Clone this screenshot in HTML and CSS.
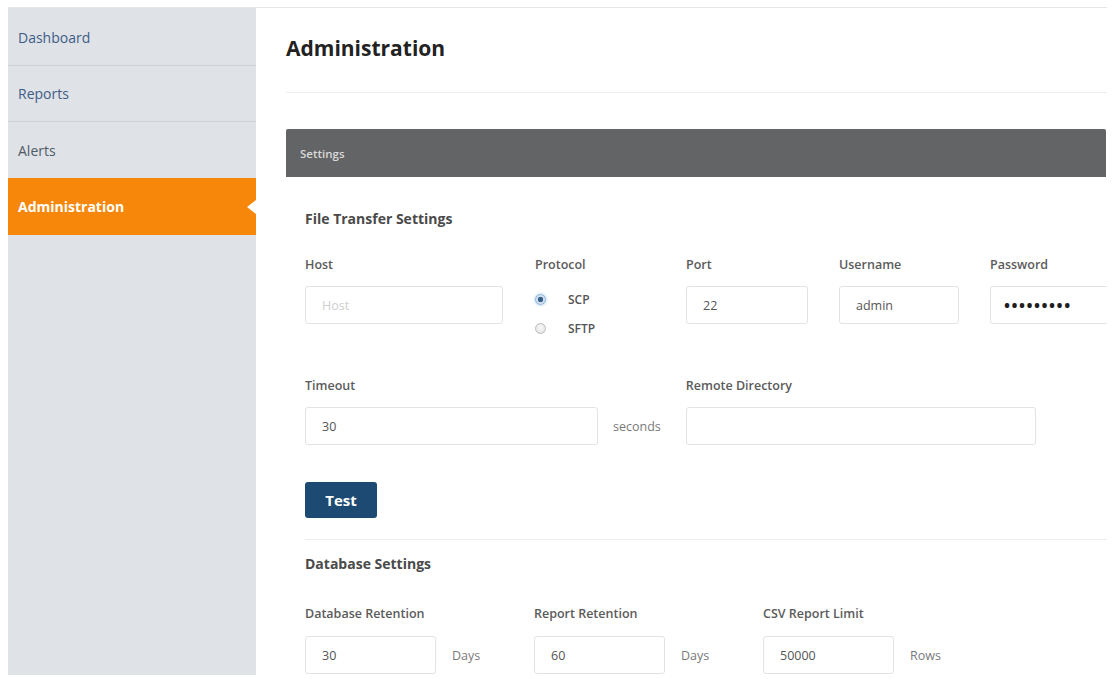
FILE: index.html
```html
<!DOCTYPE html>
<html lang="en">
<head>
    <meta charset="UTF-8">
    <meta name="viewport" content="width=device-width, initial-scale=1.0">
    <title>Administration</title>
    <link rel="stylesheet" href="styles.css">
</head>
<body>

<div class="page">
  <nav class="sidebar">
    <a class="navItem" href="#">Dashboard</a>
    <a class="navItem" href="#">Reports</a>
    <a class="navItem alerts" href="#">Alerts</a>
    <a class="navItem active" href="#">Administration</a>
  </nav>

  <main class="main">
    <h1 class="pageTitle">Administration</h1>

    <section class="panel">
      <div class="panelHeader">Settings</div>
      <div class="panelBody">
        <h2 class="groupTitle">File Transfer Settings</h2>

        <div class="row">
          <div class="field colHost">
            <label>Host</label>
            <input class="input wHost" type="text" placeholder="Host">
          </div>
          <div class="field colProtocol">
            <label>Protocol</label>
            <div class="radios">
              <div class="radio"><span class="dot checked"></span>SCP</div>
              <div class="radio"><span class="dot"></span>SFTP</div>
            </div>
          </div>
          <div class="field colPort">
            <label>Port</label>
            <input class="input wPort" type="text" value="22">
          </div>
          <div class="field colUser">
            <label>Username</label>
            <input class="input wUser" type="text" value="admin">
          </div>
          <div class="field colPass">
            <label>Password</label>
            <input class="input wPass pass" type="text" value="&#8226;&#8226;&#8226;&#8226;&#8226;&#8226;&#8226;&#8226;&#8226;">
          </div>
        </div>

        <div class="row rowTimeout">
          <div class="field">
            <label>Timeout</label>
            <div class="inline">
              <input class="input wTimeout" type="text" value="30">
              <span class="unit unitSeconds">seconds</span>
            </div>
          </div>
          <div class="field">
            <label>Remote Directory</label>
            <input class="input wDir" type="text">
          </div>
        </div>

        <button class="btn">Test</button>

        <hr class="divider">

        <h2 class="groupTitle dbTitle">Database Settings</h2>

        <div class="row rowDb">
          <div class="field colDb">
            <label>Database Retention</label>
            <div class="inline">
              <input class="input wDb" type="text" value="30">
              <span class="unit">Days</span>
            </div>
          </div>
          <div class="field colDb">
            <label>Report Retention</label>
            <div class="inline">
              <input class="input wDb" type="text" value="60">
              <span class="unit">Days</span>
            </div>
          </div>
          <div class="field colDb">
            <label>CSV Report Limit</label>
            <div class="inline">
              <input class="input wDb" type="text" value="50000">
              <span class="unit">Rows</span>
            </div>
          </div>
        </div>
      </div>
    </section>
  </main>
</div>

</body>
</html>
```

FILE: styles.css
```css
body, html {
  margin: 0;
  padding: 0;
  width: 100vw;
  height: 100vh;
  overflow: hidden;
  background: #fff;
  font-family: 'Open Sans', sans-serif;
}

.page {
  display: flex;
  margin: 7px 8px 0 8px;
  border-top: 1px solid #e6e6e6;
  height: 667px;
}

/* sidebar */
.sidebar {
  width: 248px;
  flex-shrink: 0;
  background: #dfe2e6;
  display: flex;
  flex-direction: column;
  padding-top: 2px;
}

.navItem {
  display: flex;
  align-items: center;
  height: 56px;
  padding-left: 10px;
  font-size: 14px;
  color: #3e5d86;
  text-decoration: none;
  border-bottom: 1px solid #cdd0d4;
  box-sizing: border-box;
  position: relative;
}

.navItem.alerts {
  color: #4f5a66;
  border-bottom: none;
}

.navItem.active {
  height: 57px;
  background: #f7870b;
  color: #fff;
  font-weight: 700;
  border-bottom: none;
}

.navItem.active::after {
  content: "";
  position: absolute;
  right: 0;
  top: 50%;
  transform: translateY(-50%);
  border-top: 7px solid transparent;
  border-bottom: 7px solid transparent;
  border-right: 9px solid #fff;
}

/* main */
.main {
  flex: 1;
  padding: 0 0 0 30px;
  min-width: 0;
}

.pageTitle {
  margin: 0;
  padding: 25px 0 29px 0;
  font-size: 21px;
  line-height: 30px;
  font-weight: 700;
  color: #222;
  border-bottom: 1px solid #eeeeee;
}

.panel {
  margin-top: 36px;
  overflow: hidden;
}

.panelHeader {
  height: 48px;
  display: flex;
  align-items: center;
  padding-left: 14px;
  background: #636466;
  color: #d9d9d9;
  font-size: 11.5px;
  font-weight: 600;
  border-radius: 2px 2px 0 0;
  margin-right: 1px;
}

.panelBody {
  padding: 32px 0 0 21px;
  border-left: 1px solid #f2f2f2;
  margin-left: -3px;
}

.groupTitle {
  margin: 0;
  font-size: 14px;
  line-height: 20px;
  font-weight: 700;
  color: #4a4a4a;
}

.row {
  display: flex;
  align-items: flex-start;
  margin-top: 27px;
}

.field {
  display: flex;
  flex-direction: column;
  flex-shrink: 0;
}

.field label {
  font-size: 12.5px;
  line-height: 17px;
  font-weight: 600;
  color: #5b5b5b;
  margin-bottom: 13px;
}

.colHost { width: 230px; }
.colProtocol { width: 151px; }
.colPort { width: 153px; }
.colUser { width: 151px; }
.colPass { width: 140px; }

.input {
  height: 38px;
  box-sizing: border-box;
  border: 1px solid #e3e3e3;
  border-radius: 3px;
  padding: 0 0 0 16px;
  font-family: 'Open Sans', sans-serif;
  font-size: 12.5px;
  color: #555;
  background: #fff;
  outline: none;
}

.input::placeholder {
  color: #cfcfcf;
}

.wHost { width: 198px; }
.wPort { width: 122px; }
.wUser { width: 120px; }
.wPass { width: 140px; }
.wTimeout { width: 293px; }
.wDir { width: 350px; }
.wDb { width: 131px; }

.pass {
  color: #1e1e1e;
  font-size: 16px;
  font-weight: 700;
  letter-spacing: 1.5px;
  padding-left: 13px;
}

.radios {
  display: flex;
  flex-direction: column;
  gap: 3px;
}

.radio {
  display: flex;
  align-items: center;
  height: 26px;
  font-size: 12px;
  font-weight: 600;
  color: #555;
}

.dot {
  width: 11px;
  height: 11px;
  border-radius: 50%;
  border: 1px solid #bdbdbd;
  background: radial-gradient(circle at 50% 40%, #fafafa, #dedede);
  margin: 0 22px 0 0;
  box-sizing: border-box;
}

.dot.checked {
  border-color: #8fb4d8;
  background: radial-gradient(circle, #3a5f86 0 2.5px, #cfe0f0 3px);
  box-shadow: 0 0 3px #9ec3e6;
}

.rowTimeout {
  margin-top: 36px;
}

.inline {
  display: flex;
  align-items: center;
}

.unit {
  font-size: 12.5px;
  color: #7a7a7a;
  margin-left: 16px;
}

.unitSeconds {
  margin-left: 15px;
  margin-right: 25px;
}

.btn {
  display: block;
  margin-top: 37px;
  width: 72px;
  height: 36px;
  border: none;
  border-radius: 3px;
  background: #1d4a72;
  color: #fff;
  font-family: 'Open Sans', sans-serif;
  font-size: 15px;
  font-weight: 700;
  cursor: pointer;
}

.divider {
  margin: 21px 0 0 0;
  border: none;
  border-top: 1px solid #eeeeee;
}

.dbTitle {
  margin-top: 14px;
}

.rowDb {
  margin-top: 31px;
}

.colDb {
  width: 229px;
}

.colDb label {
  margin-bottom: 14px;
}
```
